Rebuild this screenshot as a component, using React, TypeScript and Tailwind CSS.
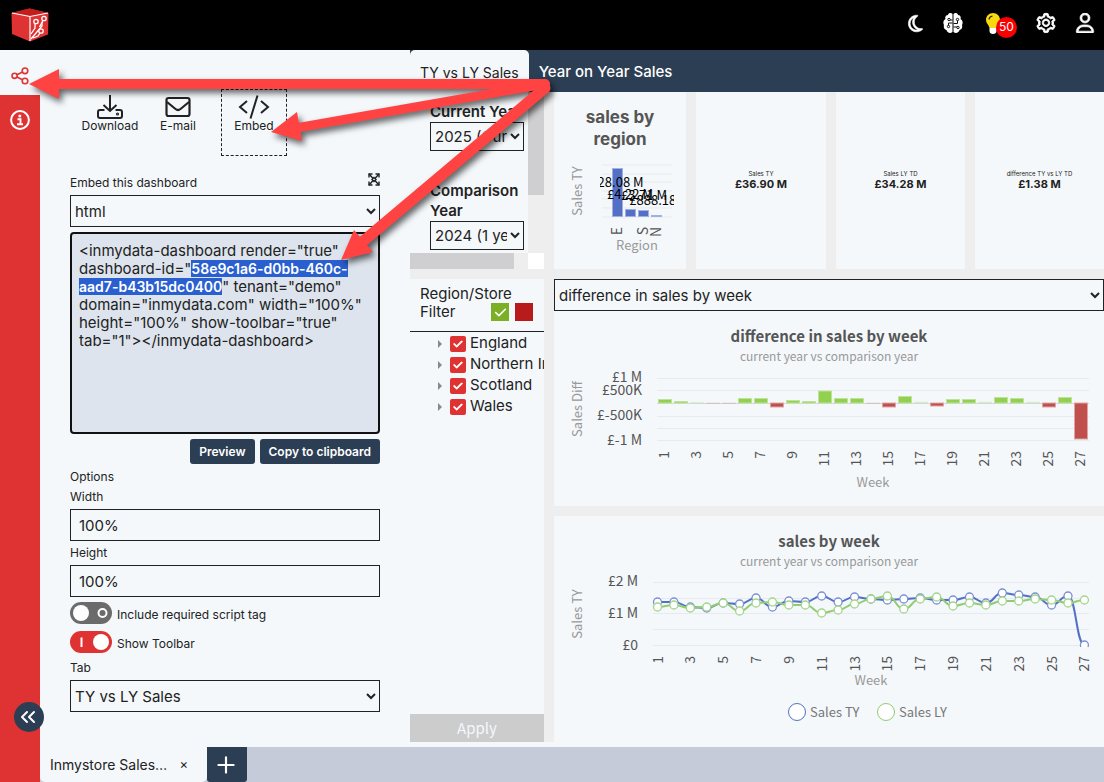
import * as React from "react";
import { FaRegMoon, FaRegUser, FaCheck } from "react-icons/fa6";
import { AiOutlineSetting } from "react-icons/ai";
import { ChevronsLeft, Plus } from "lucide-react";

const FIELD = "w-full h-8 border border-[#222] bg-transparent text-[15px] text-[#222]";
const CHART_FONT = "font-['Noto_Sans_CJK_SC','Open_Sans',sans-serif]";

const regions = ["England", "Northern Ireland", "Scotland", "Wales"];

const kpis = [
  { label: "Sales TY", value: "£36.90 M" },
  { label: "Sales LY TD", value: "£34.28 M" },
  { label: "difference TY vs LY TD", value: "£1.38 M" },
];

// bar heights, positive values go up from the zero line
const diffs = [
  3.5, 1.5, 0.5, -0.5, -0.5, 4.5, 4.5, -4, 2.5, 1.5, 12, 4.5, 4.5, -0.5, -4, 6.5, 1, -3, 3.5, 3.5, 1, 5.5, 4.5, 1, -4,
  5.5, -36,
];

const salesTY = [
  86, 86, 91, 92, 87, 88, 82, 91, 85, 86, 80, 86, 81, 83, 84, 83, 82, 84, 84, 81, 87, 77, 79, 81, 89, 80, 129,
];
const salesLY = [
  91, 89, 92, 91, 87, 95, 87, 86, 89, 89, 97, 94, 88, 83, 80, 93, 83, 81, 90, 87, 89, 85, 85, 83, 84, 87, 84,
];

const oddWeeks = Array.from({ length: 14 }, (_, i) => i * 2 + 1);
const pointX = (i: number) => 103.5 + i * 16.42;

const smoothPath = (values: number[]) =>
  values.reduce((path, y, i) => {
    if (i === 0) return `M${pointX(0)} ${y}`;
    const mid = (pointX(i - 1) + pointX(i)) / 2;
    return `${path} C${mid} ${values[i - 1]} ${mid} ${y} ${pointX(i)} ${y}`;
  }, "");

const Logo = () => (
  <svg width="38" height="34" viewBox="0 0 38 34" aria-label="inmydata" role="img">
    <path d="M0.5 5 L18.5 0.5 L37.5 5 L37 26.500 L19 33.500 L1 26Z" fill="#df3333" />
    <path d="M0.500 5 L18.500 0.500 L37.500 5 L19 8.500Z" fill="#c41d1d" />
    <path d="M19 8.500 V33 M1 5 L19 8.500 L37 5" fill="none" stroke="#fff" strokeWidth="1.200" />
    <path d="M20 26 L24 20 V16 M20 31 L31 18 V14 M22 30 L27 28 L29 25" fill="none" stroke="#fff" strokeWidth="1.300" />
    <g fill="#df3333" stroke="#fff" strokeWidth="1.300">
      <circle cx="25" cy="13.500" r="2.200" />
      <circle cx="33" cy="10.500" r="2.200" />
      <circle cx="30" cy="23" r="2.200" />
      <path d="M32 12.500 L28.500 19" />
    </g>
  </svg>
);

const BrainIcon = () => (
  <svg width="20" height="22" viewBox="0 0 20 22">
    <path
      d="M9.500 2 C8.500 0.500 5.500 0.500 5 3 C2.800 3 1.700 5 2.500 7 C0.300 8 -0.200 11 1 13 C0.300 15 1.200 17.500 3.500 18 C4 20.500 7 22 9.500 20Z M10.500 2 C11.500 0.500 14.500 0.500 15 3 C17.200 3 18.300 5 17.500 7 C19.700 8 20.200 11 19 13 C19.700 15 18.800 17.500 16.500 18 C16 20.500 13 22 10.500 20Z"
      fill="#fff"
    />
    <g fill="none" stroke="#111" strokeWidth="1">
      <path d="M9.500 8 H7 M10.500 11.500 H14.500 V8.500 M9.500 11 H5.500 V13.500 M10.500 15 H14" />
      <circle cx="6" cy="7.500" r="1.200" />
      <circle cx="14.500" cy="7.500" r="1.200" />
      <circle cx="5.500" cy="14.500" r="1.200" />
      <circle cx="15" cy="15.500" r="1.200" />
    </g>
  </svg>
);

const BulbIcon = () => (
  <svg width="14" height="21" viewBox="0 0 14 21">
    <path d="M7 0 C3 0 0 3 0 6.800 C0 10.500 3 12 3.500 15 H10.500 C11 12 14 10.500 14 6.800 C14 3 11 0 7 0Z" fill="#f8d80f" />
    <path d="M3 6.500 C3.200 4.500 4.700 3.200 6.500 3" fill="none" stroke="#222" strokeWidth="1.200" />
    <path d="M3.500 15 H10.500 V18 C10.500 20 9 21 7 21 C5 21 3.500 20 3.500 18Z" fill="#fff" />
  </svg>
);

const Header = () => (
  <header className="flex h-[50px] items-center justify-between bg-black pb-1 pl-[11px] pr-[9px] text-white">
    <div className="pt-1">
      <Logo />
    </div>
    <div className="flex items-center">
      <button aria-label="Dark mode" className="mr-[18px]">
        <FaRegMoon size={19} stroke="#fff" strokeWidth={16} />
      </button>
      <button aria-label="Copilot" className="mr-[23px]">
        <BrainIcon />
      </button>
      <button aria-label="Insights" className="relative mr-[18px] w-[31px]">
        <BulbIcon />
        <span className="absolute top-1 left-[10px] flex h-[21px] w-[21px] items-center justify-center rounded-full bg-[#fb0000] text-[12px]">
          50
        </span>
      </button>
      <button aria-label="Settings" className="mr-[18px]">
        <AiOutlineSetting size={22} stroke="#fff" strokeWidth={40} />
      </button>
      <button aria-label="Account">
        <FaRegUser size={20} stroke="#fff" strokeWidth={16} />
      </button>
    </div>
  </header>
);

const Sidebar = () => (
  <nav className="relative w-10 shrink-0 bg-[#df3333]">
    <button aria-label="Share" className="flex h-[45px] w-10 items-center justify-center bg-[#f4f8fb] pt-[6px]">
      <svg width="18" height="18" viewBox="0 0 18 18" fill="none" stroke="#df3333" strokeWidth="1.600">
        <circle cx="3.600" cy="8.800" r="2.600" />
        <circle cx="14" cy="3.800" r="2.800" />
        <circle cx="14" cy="14" r="2.800" />
        <path d="M6 7.700 L11.500 5 M6 10 L11.500 12.700" />
      </svg>
    </button>
    <button aria-label="Information" className="flex h-[50px] w-10 items-center justify-center">
      <svg width="20" height="20" viewBox="0 0 20 20">
        <circle cx="10" cy="10" r="8.900" fill="none" stroke="#fff" strokeWidth="2" />
        <circle cx="9.800" cy="6" r="1.500" fill="#fff" />
        <path d="M7.500 9.200 H10.500 V14 M7 14.200 H13" fill="none" stroke="#fff" strokeWidth="1.900" />
      </svg>
    </button>
    <button
      aria-label="Collapse panel"
      className="absolute bottom-[50px] left-[14px] z-10 flex h-[30px] w-[30px] items-center justify-center rounded-full bg-[#2b3e53] pr-[2px] text-white"
    >
      <ChevronsLeft size={24} strokeWidth={2} />
    </button>
  </nav>
);

const Toggle = ({ id, label, on }: { id: string; label: string; on: boolean }) => (
  <div className="flex h-[22px] items-center gap-[5px]">
    <span className="relative h-[22px] w-[42px]">
      <input
        id={id}
        type="checkbox"
        defaultChecked={on}
        className="h-[22px] w-[42px] appearance-none rounded-full bg-[#6b6b6b] p-[3px] before:block before:h-4 before:w-4 before:rounded-full before:bg-white checked:bg-[#df3333] checked:before:ml-5"
      />
      <svg className="pointer-events-none absolute inset-0" width="42" height="22" viewBox="0 0 42 22" fill="none" stroke="#fff" strokeWidth="2">
        {on ? <path d="M11.500 6.500 V16" /> : <circle cx="32.500" cy="11" r="4" />}
      </svg>
    </span>
    <label htmlFor={id} className="pt-[3px] text-[12px]">{label}</label>
  </div>
);

const SharePanel = () => (
  <aside className="w-[370px] shrink-0 px-[30px] pt-[39px] pb-[35px] text-[#222]">
    <div className="flex text-[12px] leading-[14px]">
      <button className="flex h-[67px] w-20 flex-col items-center pt-[5px]">
        <svg width="26" height="25" viewBox="0 0 26 25" fill="none" stroke="#222" strokeWidth="2">
          <path d="M13 1 V17 M6.500 11 L13 17 L19.500 11" />
          <path d="M7.500 16 H3 Q1 16 1 18 V22 Q1 24 3 24 H23 Q25 24 25 22 V18 Q25 16 23 16 H18.500" />
          <circle cx="20.500" cy="20" r="0.600" />
        </svg>
        Download
      </button>
      <button className="flex h-[67px] w-14 flex-col items-center pt-[5px]">
        <svg width="26" height="25" viewBox="0 0 26 25" fill="none" stroke="#222" strokeWidth="2.200">
          <rect x="1.500" y="4" width="23" height="18" rx="2" />
          <path d="M2 8 L10.500 15 Q13 17 15.500 15 L24 8" />
        </svg>
        E-mail
      </button>
      <button className="ml-[15px] flex h-[67px] w-[66px] flex-col items-center border border-dashed border-[#222] pt-[4px]">
        <svg width="32" height="25" viewBox="0 0 32 25" fill="none" stroke="#222" strokeWidth="2">
          <path d="M9 7 L2 13 L9 19 M23 7 L30 13 L23 19 M19.500 1.500 L12.500 24.500" />
        </svg>
        Embed
      </button>
    </div>

    <div className="mt-[17px] flex h-[22px] items-start justify-between text-[12px]">
      <label htmlFor="embed-type" className="leading-5">Embed this dashboard</label>
      <button aria-label="Expand">
        <svg width="12" height="13" viewBox="0 0 12 13" fill="none" stroke="#222" strokeWidth="1.400">
          <path d="M1 4.500 V1 H4.500 M7.500 1 H11 V4.500 M11 8.500 V12 H7.500 M4.500 12 H1 V8.500" />
          <path d="M1 1 L11 12 M11 1 L1 12" />
          <path d="M4 6.500 L6 4.500 L8 6.500 L6 8.500Z" fill="#f4f8fb" />
        </svg>
      </button>
    </div>
    <select id="embed-type" className={FIELD}>
      <option>html</option>
    </select>
    <div
      role="textbox"
      aria-multiline="true"
      aria-label="Embed code"
      contentEditable
      suppressContentEditableWarning
      spellCheck={false}
      className="mt-[5px] h-[202px] rounded-[4px] border-2 border-[#111] bg-[#dde4ed] px-[7px] py-[8px] text-[15px] leading-[18px] outline-none"
    >
      {'<inmydata-dashboard render="true" dashboard-id="'}
      <mark className="bg-[#2a5fd0] text-[14px] font-semibold text-white">58e9c1a6-d0bb-460c-aad7-b43b15dc0400</mark>
      {'" tenant="demo" domain="inmydata.com" width="100%" height="100%" show-toolbar="true" tab="1"></inmydata-dashboard>'}
    </div>
    <div className="mt-[5px] flex justify-end gap-[5px] text-[12px] font-semibold text-white">
      <button className="h-[25px] rounded-[3px] bg-[#2b3e53] px-[9px]">Preview</button>
      <button className="h-[25px] rounded-[3px] bg-[#2b3e53] px-[9px]">Copy to clipboard</button>
    </div>

    <div className="mt-[3px] text-[12px] leading-5">
      <h2>Options</h2>
      <label htmlFor="embed-width" className="block h-[22px]">Width</label>
      <input id="embed-width" className={`${FIELD} px-2`} defaultValue="100%" />
      <label htmlFor="embed-height" className="mt-[2px] block h-[22px]">Height</label>
      <input id="embed-height" className={`${FIELD} px-2`} defaultValue="100%" />
    </div>
    <div className="mt-[5px] flex flex-col gap-[7px]">
      <Toggle id="script-tag" label="Include required script tag" on={false} />
      <Toggle id="show-toolbar" label="Show Toolbar" on />
    </div>
    <label htmlFor="embed-tab" className="mt-[5px] block h-[22px] text-[12px] leading-5">Tab</label>
    <select id="embed-tab" className={FIELD}>
      <option>TY vs LY Sales</option>
    </select>
  </aside>
);

const YearFilter = () => (
  <div className="grid h-[177px] grid-cols-[1fr_16px] grid-rows-[1fr_16px] bg-[#eee]">
    <div className="overflow-hidden bg-[#f4f8fb] pt-[10px] pr-1 pl-5 text-[15px] leading-5 text-[#222]">
      <label htmlFor="current-year" className="block overflow-hidden font-semibold whitespace-nowrap">Current Year</label>
      <select id="current-year" className="h-[29px] w-full border border-[#222] bg-transparent">
        <option>2025 (Current Year)</option>
      </select>
      <label htmlFor="comparison-year" className="mt-[30px] block font-semibold">Comparison Year</label>
      <select id="comparison-year" className="h-[29px] w-full border border-[#222] bg-transparent">
        <option>2024 (1 year ago)</option>
      </select>
    </div>
    <div className="h-[103px] bg-[#cfcfd1]" />
    <div className="mr-[14px] bg-[#cfcfd1]" />
    <div className="bg-white" />
  </div>
);

const RegionFilter = () => (
  <div className="mt-[10px] flex flex-1 flex-col bg-[#f4f8fb] text-[15px] text-[#222]">
    <div className="border-b border-[#222] pt-[6px] pr-[11px] pb-[10px] pl-[10px] leading-[18px]">
      <div>Region/Store</div>
      <div className="flex items-center gap-[6px]">
        <span className="flex-1">Filter</span>
        <button aria-label="Select all" className="flex h-[18px] w-[18px] items-center justify-center bg-[#7bb026] text-white">
          <FaCheck size={13} />
        </button>
        <button aria-label="Clear all" className="h-[18px] w-[18px] bg-[#b81b1b]" />
      </div>
    </div>
    <ul className="flex-1 overflow-hidden pt-px pl-[28px]">
      {regions.map((region) => (
        <li key={region} className="flex h-[21px] items-center">
          <svg width="4" height="8" viewBox="0 0 4 8" className="mr-2 shrink-0"><path d="M0 0 L4 4 L0 8Z" fill="#888" /></svg>
          <label className="flex items-center gap-1 whitespace-nowrap">
            <span className="relative h-4 w-4 shrink-0">
              <input type="checkbox" defaultChecked className="block h-4 w-4 appearance-none rounded-[2px] bg-[#df3333]" />
              <FaCheck size={10} color="#fff" stroke="#fff" strokeWidth={40} className="pointer-events-none absolute top-[3px] left-[3px]" />
            </span>
            {region}
          </label>
        </li>
      ))}
    </ul>
    <button className={`h-7 bg-[#ccc] pt-px text-[15px] text-[#f4f8fb] ${CHART_FONT}`}>Apply</button>
  </div>
);

const RegionChart = () => (
  <svg viewBox="0 0 132 177" className="w-full" fontSize="13">
    <g fontSize="17" fontWeight="700" fill="#555" textAnchor="middle" className="font-['Inter',sans-serif]">
      <text x="66" y="31">sales by</text>
      <text x="66" y="53">region</text>
    </g>
    <clipPath id="labels"><rect x="46" y="60" width="74" height="70" /></clipPath>
    {[73, 82, 90, 99, 107, 116, 125].map((y) => (
      <path key={y} d={`M48 ${y} H118`} stroke="#e7ebef" />
    ))}
    <g fill="#5470c6" stroke="#a0b0e0">
      <rect x="58.500" y="76.500" width="10" height="48" />
      <rect x="71.500" y="117.500" width="10" height="7" />
      <rect x="84.500" y="118.500" width="10" height="6" />
      <rect x="97.500" y="123.500" width="10" height="1" />
    </g>
    <g className={CHART_FONT} clipPath="url(#labels)" textAnchor="middle">
      <text x="63" y="95">£28.08 M</text>
      <text x="76" y="107">£4.22 M</text>
      <text x="90" y="108">£3.71 M</text>
      <text x="103" y="113">£888.18K</text>
    </g>
    <g className={CHART_FONT} fill="#555" fontSize="14" textAnchor="middle">
      <text transform="translate(68 139) rotate(-90)">E</text>
      <text transform="translate(94 139) rotate(-90)">S</text>
      <text transform="translate(107 140) rotate(-90)">N</text>
    </g>
    <g className={CHART_FONT} fill="#999" textAnchor="middle">
      <text x="83" y="158">Region</text>
      <text transform="translate(28 99) rotate(-90)">Sales TY</text>
    </g>
  </svg>
);

const ChartTitle = ({ title }: { title: string }) => (
  <g textAnchor="middle">
    <text x="275" y="31" fontSize="15" fontWeight="700" fill="#555">{title}</text>
    <text x="275" y="50" fontSize="12" fill="#999">current year vs comparison year</text>
  </g>
);

const DifferenceChart = () => (
  <svg viewBox="0 0 550 195" className={`w-full bg-[#f4f8fb] ${CHART_FONT}`} fontSize="13">
    <ChartTitle title="difference in sales by week" />
    {[67, 79, 92, 105, 117, 129].map((y) => (
      <path key={y} d={`M103 ${y}.5 H535`} stroke={y === 92 ? "#d5d8db" : "#e7ebef"} />
    ))}
    <g fill="#555" fontSize="14" textAnchor="end">
      <text x="88" y="71">£1 M</text>
      <text x="88" y="84">£500K</text>
      <text x="88" y="109">£-500K</text>
      <text x="88" y="134">£-1 M</text>
    </g>
    {diffs.map((d, i) => (
      <rect
        key={i}
        x={104.5 + i * 16}
        y={d > 0 ? 92 - d : 92}
        width="13"
        height={Math.abs(d)}
        fill={d > 0 ? "#92d14f" : "#c0504d"}
        stroke={d > 0 ? "#bfe39b" : "#dfa5a4"}
        strokeOpacity={Math.abs(d) < 1.2 ? 0.3 : 1}
        fillOpacity={Math.abs(d) < 1.2 ? 0.2 : 1}
      />
    ))}
    <g fill="#555" fontSize="14" textAnchor="end">
      {oddWeeks.map((w) => (
        <text key={w} transform={`translate(${99 + w * 16} 140) rotate(-90)`}>{w}</text>
      ))}
    </g>
    <g fill="#999" textAnchor="middle">
      <text x="319" y="176">Week</text>
      <text transform="translate(28 98) rotate(-90)">Sales Diff</text>
    </g>
  </svg>
);

const SalesChart = () => (
  <svg viewBox="0 0 550 226" className={`mt-[10px] w-full bg-[#f4f8fb] ${CHART_FONT}`} fontSize="13">
    <ChartTitle title="sales by week" />
    {[66, 82, 97, 113, 129].map((y) => (
      <path key={y} d={`M99 ${y}.5 H535`} stroke="#e7ebef" />
    ))}
    <g fill="#555" fontSize="14" textAnchor="end">
      <text x="84" y="70">£2 M</text>
      <text x="84" y="102">£1 M</text>
      <text x="84" y="134">£0</text>
    </g>
    <clipPath id="plot"><rect x="90" y="60" width="455" height="71" /></clipPath>
    <g clipPath="url(#plot)">
      {[{ values: salesTY, color: "#5470c6", ring: "#7b91d3" }, { values: salesLY, color: "#91cc75", ring: "#a3d58b" }].map((s) => (
        <g key={s.color}>
          <path d={smoothPath(s.values)} fill="none" stroke={s.color} strokeWidth="2" />
          {s.values.map((y, i) => (
            <circle key={i} cx={pointX(i)} cy={y} r="4" fill="#fff" stroke={s.ring} strokeWidth="1.300" />
          ))}
        </g>
      ))}
    </g>
    <g fill="#555" fontSize="14" textAnchor="end">
      {oddWeeks.map((w) => (
        <text key={w} transform={`translate(${pointX(w - 1) + 5} 140) rotate(-90)`}>{w}</text>
      ))}
    </g>
    <g fill="#999" textAnchor="middle">
      <text x="317" y="169">Week</text>
      <text transform="translate(28 98) rotate(-90)">Sales TY</text>
    </g>
    <circle cx="243" cy="196" r="8.500" fill="#fff" stroke="#5470c6" />
    <text x="256" y="201" fill="#777">Sales TY</text>
    <circle cx="332" cy="196" r="8.500" fill="#fff" stroke="#91cc75" />
    <text x="345" y="201" fill="#777">Sales LY</text>
  </svg>
);

const Dashboard = () => (
  <main className="flex min-w-0 flex-1 flex-col">
    <div className="flex h-[42px] bg-[#2b3e53]">
      <button className="rounded-t-[5px] bg-[#f4f8fb] px-[10px] pt-[2px] text-[14px] text-[#222]">TY vs LY Sales</button>
      <button className="px-[10px] pt-[2px] text-[15px] font-medium text-white">Year on Year Sales</button>
    </div>
    <div className="mb-[5px] flex flex-1 gap-[10px] bg-[#eee]">
      <div className="flex w-[134px] shrink-0 flex-col">
        <YearFilter />
        <RegionFilter />
      </div>
      <div className="flex min-w-0 flex-1 flex-col">
        <div className="grid grid-cols-[132fr_130fr_129fr_129fr] gap-[10px]">
          <div className="bg-[#f4f8fb]"><RegionChart /></div>
          {kpis.map((kpi) => (
            <div key={kpi.label} className="flex flex-col items-center justify-center bg-[#f4f8fb] text-[#222]">
              <span className="text-[6px] leading-[8px]">{kpi.label}</span>
              <span className="pb-[2px] text-[11px] leading-[12px] font-bold">{kpi.value}</span>
            </div>
          ))}
        </div>
        <select aria-label="Chart" className="mt-[10px] h-8 w-full border border-[#222] bg-[#f4f8fb] text-[15px] text-[#222]">
          <option>difference in sales by week</option>
        </select>
        <DifferenceChart />
        <SalesChart />
      </div>
    </div>
  </main>
);

const BottomTabs = () => (
  <footer className="flex h-[35px] bg-[#c5cbd8]">
    <div className="flex w-[167px] items-center justify-between rounded-b-[5px] bg-[#f4f8fb] pr-[19px] pl-[10px] text-[14px] text-[#222]">
      <span>Inmystore Sales…</span>
      <button aria-label="Close tab" className="text-[13px]">×</button>
    </div>
    <button aria-label="New tab" className="flex w-10 items-center justify-center rounded-b-[3px] bg-[#2b3e53] pr-[2px] text-white">
      <Plus size={26} strokeWidth={2} />
    </button>
  </footer>
);

// callout arrows drawn over the whole page
const Arrows = () => (
  <svg
    className="pointer-events-none absolute top-0 left-0 z-20 drop-shadow-[3px_4px_3px_rgba(0,0,0,0.6)]"
    width="600"
    height="300"
    viewBox="0 0 600 300"
    fill="#ff4343"
    stroke="#ff4343"
  >
    <path d="M55 84 H545" strokeWidth="10" strokeLinecap="round" />
    <path d="M29 84 L59 69 V99Z" stroke="none" />
    <path d="M296 128 L545 84" strokeWidth="9" strokeLinecap="round" />
    <path d="M271 132 L297 112 L302 141Z" stroke="none" />
    <path d="M361 243 L545 88" strokeWidth="11" strokeLinecap="round" />
    <path d="M341 260 L354 230 L373 252Z" stroke="none" />
  </svg>
);

const App: React.FC = () => {
  return (
    <div className="relative flex min-h-screen flex-col bg-[#f4f8fb] font-['Inter','Liberation_Sans',sans-serif]">
      <Header />
      <div className="flex flex-1">
        <Sidebar />
        <div className="flex min-w-0 flex-1 flex-col">
          <div className="flex flex-1">
            <SharePanel />
            <Dashboard />
          </div>
          <BottomTabs />
        </div>
      </div>
      <Arrows />
    </div>
  );
};

export default App;
